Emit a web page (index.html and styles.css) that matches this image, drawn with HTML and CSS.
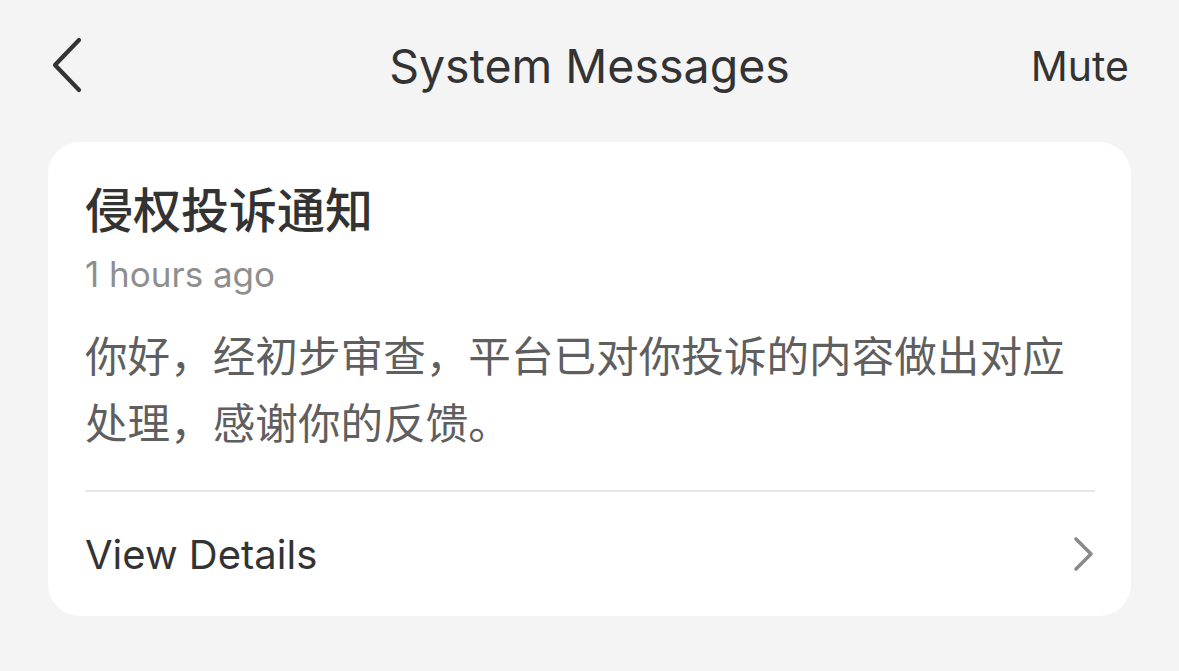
FILE: index.html
```html
<!DOCTYPE html>
<html lang="zh-CN">
<head>
    <meta charset="UTF-8">
    <meta name="viewport" content="width=device-width, initial-scale=1.0">
    <title>System Messages</title>
    <link rel="stylesheet" href="styles.css">
</head>
<body>

<div class="topbar">
    <button class="back" aria-label="Back">
        <svg width="34" height="58" viewBox="0 0 34 58">
            <path d="M29 3 L5 28 L29 53" fill="none" stroke="#333" stroke-width="4.2" stroke-linecap="round" stroke-linejoin="round"/>
        </svg>
    </button>
    <h1 class="title">System Messages</h1>
    <button class="mute">Mute</button>
</div>

<div class="card">
    <h2 class="card-title">侵权投诉通知</h2>
    <p class="time">1 hours ago</p>
    <p class="text">你好，经初步审查，平台已对你投诉的内容做出对应处理，感谢你的反馈。</p>
    <a class="details" href="#">
        <span>View Details</span>
        <svg width="22" height="36" viewBox="0 0 22 36">
            <path d="M3 3 L18 18 L3 33" fill="none" stroke="#8a8a8a" stroke-width="3.6" stroke-linecap="round" stroke-linejoin="round"/>
        </svg>
    </a>
</div>

</body>
</html>
```

FILE: styles.css
```css
body {
    margin: 0;
    background: #f4f4f4;
    font-family: Inter, "Noto Sans CJK SC", sans-serif;
    color: #333;
}
button {
    background: none;
    border: none;
    padding: 0;
    font-family: inherit;
    cursor: pointer;
}
.topbar {
    height: 132px;
    display: grid;
    grid-template-columns: 1fr auto 1fr;
    align-items: center;
    padding: 0 50px 0 50px;
}
.back {
    width: 34px;
    height: 58px;
    display: flex;
}
.title {
    margin: 0;
    font-size: 46.5px;
    font-weight: 400;
    color: #333;
}
.mute {
    justify-self: end;
    font-size: 41px;
    color: #333;
}
.card {
    margin: 10px 48px 0;
    background: #fff;
    border-radius: 32px;
    padding: 36px 36px 0 37px;
}
.card-title {
    margin: 0;
    font-family: "Noto Sans CJK SC", sans-serif;
    font-size: 48px;
    font-weight: 500;
    line-height: 58px;
    color: #333;
}
.time {
    margin: 16px 0 0;
    font-size: 35px;
    line-height: 44px;
    color: #8e8e8e;
}
.text {
    margin: 24px 0 0;
    font-family: "Noto Sans CJK SC", sans-serif;
    font-size: 42.6px;
    line-height: 67px;
    color: #5f5f5f;
}
.details {
    margin-top: 36px;
    border-top: 2px solid #e8e8e8;
    height: 124px;
    display: flex;
    align-items: center;
    justify-content: space-between;
    text-decoration: none;
    font-size: 40px;
    color: #333;
}
```
